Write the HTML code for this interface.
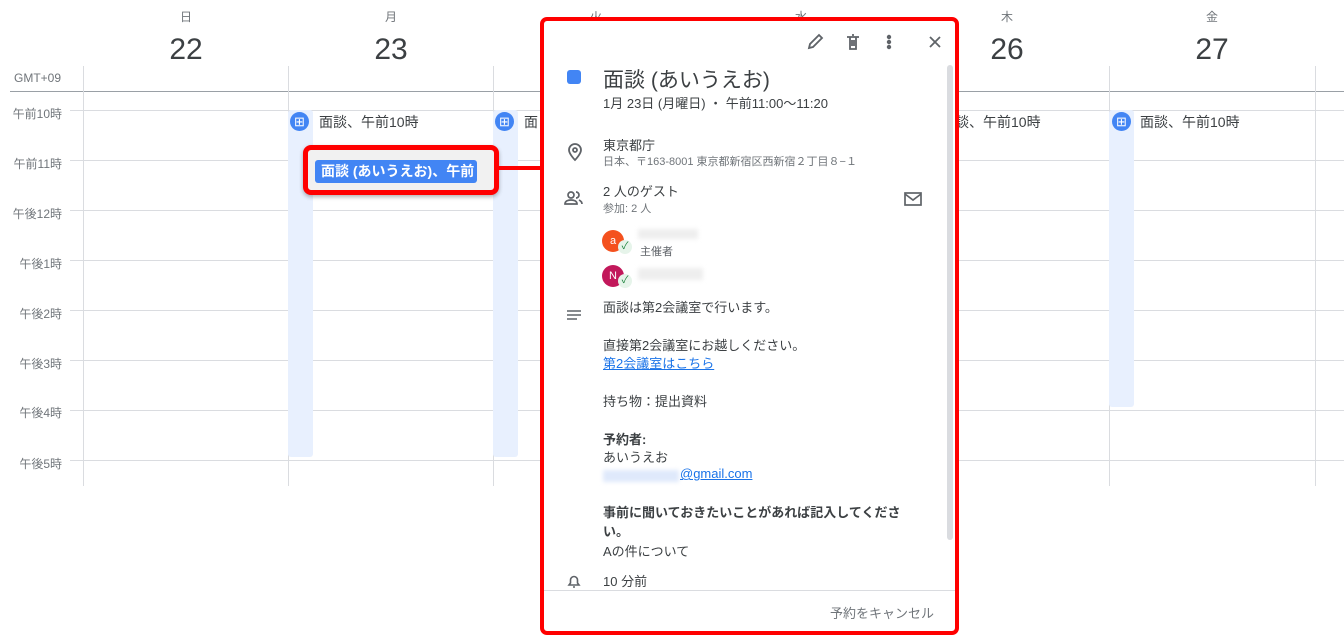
<!DOCTYPE html><html><head><meta charset="utf-8"><style>
*{margin:0;padding:0;box-sizing:border-box}
body{width:1344px;height:639px;background:#fff;font-family:"Liberation Sans","Noto Sans CJK JP",sans-serif;color:#3c4043;position:relative;overflow:hidden}
.a{position:absolute}
.dn{font-size:12px;color:#70757a;width:40px;text-align:center}
.dd{font-size:30px;color:#3c4043;width:80px;text-align:center}
.vl{width:1px;background:#dadce0;top:66px;height:420px}
.hl{height:1px;background:#dadce0;left:70px;width:1274px}
.tl{font-size:12px;color:#70757a;right:1282px;text-align:right;white-space:nowrap}
.ev{background:#e8f0fe;width:25px;border-radius:3px}
.ic{width:19px;height:19px;border-radius:50%;background:#4285f4;color:#fff;font-size:13px;text-align:center;line-height:19px}
.et{font-size:14px;color:#3c4043;white-space:nowrap}
.p{font-size:13px;color:#3c4043;white-space:nowrap}
</style></head><body>
<div class="a dn" style="left:166px;top:8px">日</div><div class="a dd" style="left:146px;top:33px">22</div>
<div class="a dn" style="left:371px;top:8px">月</div><div class="a dd" style="left:351px;top:33px">23</div>
<div class="a dn" style="left:576px;top:8px">火</div>
<div class="a dn" style="left:781px;top:8px">水</div>
<div class="a dn" style="left:987px;top:8px">木</div><div class="a dd" style="left:967px;top:33px">26</div>
<div class="a dn" style="left:1192px;top:8px">金</div><div class="a dd" style="left:1172px;top:33px">27</div>
<div class="a" style="left:14px;top:71px;font-size:12px;color:#70757a">GMT+09</div>
<div class="a" style="left:10px;top:91px;width:1334px;height:1px;background:#9aa0a6"></div>
<div class="a vl" style="left:83px"></div><div class="a vl" style="left:288px"></div><div class="a vl" style="left:493px"></div><div class="a vl" style="left:699px"></div><div class="a vl" style="left:904px"></div><div class="a vl" style="left:1109px"></div><div class="a vl" style="left:1315px"></div>
<div class="a hl" style="top:110px"></div><div class="a hl" style="top:160px"></div><div class="a hl" style="top:210px"></div><div class="a hl" style="top:260px"></div><div class="a hl" style="top:310px"></div><div class="a hl" style="top:360px"></div><div class="a hl" style="top:410px"></div><div class="a hl" style="top:460px"></div>
<div class="a tl" style="top:105px">午前10時</div><div class="a tl" style="top:155px">午前11時</div><div class="a tl" style="top:205px">午後12時</div><div class="a tl" style="top:255px">午後1時</div><div class="a tl" style="top:305px">午後2時</div><div class="a tl" style="top:355px">午後3時</div><div class="a tl" style="top:404px">午後4時</div><div class="a tl" style="top:455px">午後5時</div>
<div class="a ev" style="left:288px;top:110px;height:347px"></div>
<div class="a ev" style="left:493px;top:110px;height:347px"></div>
<div class="a ev" style="left:1109px;top:110px;height:297px"></div>
<div class="a ic" style="left:290px;top:112px">⊞</div><div class="a et" style="left:319px;top:112px">面談、午前10時</div>
<div class="a ic" style="left:495px;top:112px">⊞</div><div class="a et" style="left:524px;top:112px">面</div>
<div class="a et" style="left:955px;top:112px">談、午前10時</div>
<div class="a ic" style="left:1112px;top:112px">⊞</div><div class="a et" style="left:1140px;top:112px">面談、午前10時</div>
<div class="a" style="left:303px;top:145px;width:196px;height:50px;border:5px solid #f00;border-radius:8px;background:#f1f1f1;box-shadow:0 2px 4px rgba(0,0,0,.3)"></div>
<div class="a" style="left:315px;top:160px;width:162px;height:23px;background:#4285f4;border-radius:3px;color:#fff;font-weight:bold;font-size:14px;line-height:23px;padding-left:6px;overflow:hidden;white-space:nowrap">面談 (あいうえお)、午前</div>
<div class="a" style="left:498px;top:166px;width:44px;height:4px;background:#f00"></div>
<div class="a" style="left:540px;top:17px;width:419px;height:618px;border:4px solid #f00;border-radius:7px;background:#fff"></div>
<div class="a" style="left:947px;top:65px;width:6px;height:475px;background:#dadce0;border-radius:3px"></div>
<svg class="a" style="left:805px;top:32px" width="140" height="20" fill="none" stroke="#5f6368" stroke-width="1.8"><path d="M4 16l1-4L14 3l3 3-9 9z"/><path d="M42 5h12M45 5v12h6V5M47 3h2M47 8v6M49 8v6"/><circle cx="84" cy="5" r="1.3" fill="#5f6368"/><circle cx="84" cy="10" r="1.3" fill="#5f6368"/><circle cx="84" cy="15" r="1.3" fill="#5f6368"/><path d="M125 5l10 10M135 5l-10 10"/></svg>
<div class="a" style="left:567px;top:70px;width:14px;height:14px;background:#4285f4;border-radius:3px"></div>
<div class="a" style="left:603px;top:64px;font-size:21px;color:#3c4043">面談 (あいうえお)</div>
<div class="a p" style="left:603px;top:93px">1月 23日 (月曜日) ・ 午前11:00～11:20</div>
<svg class="a" style="left:565px;top:142px" width="20" height="20" fill="none" stroke="#5f6368" stroke-width="1.8"><path d="M10 18s-6-6-6-10a6 6 0 0 1 12 0c0 4-6 10-6 10z"/><circle cx="10" cy="8" r="2"/></svg>
<div class="a p" style="left:603px;top:135px">東京都庁</div>
<div class="a" style="left:603px;top:153px;font-size:11px;color:#70757a">日本、〒163-8001 東京都新宿区西新宿２丁目８−１</div>
<svg class="a" style="left:564px;top:190px" width="20" height="16" fill="none" stroke="#5f6368" stroke-width="1.7"><circle cx="7" cy="5" r="3"/><path d="M1 14c0-3 3-4 6-4s6 1 6 4zM12 2a3 3 0 0 1 0 6M15 10c2 1 3 2 3 4"/></svg>
<div class="a p" style="left:603px;top:181px">2 人のゲスト</div>
<div class="a" style="left:603px;top:200px;font-size:11px;color:#70757a">参加: 2 人</div>
<svg class="a" style="left:904px;top:192px" width="18" height="14" fill="none" stroke="#5f6368" stroke-width="1.7"><rect x="1" y="1" width="16" height="12"/><path d="M1 2l8 6 8-6"/></svg>
<div class="a" style="left:602px;top:230px;width:22px;height:22px;border-radius:50%;background:#f4511e;color:#fff;font-size:11px;text-align:center;line-height:22px">a</div>
<div class="a" style="left:618px;top:240px;width:14px;height:14px;border-radius:50%;background:#e6f4ea;color:#188038;font-size:10px;text-align:center;line-height:14px">✓</div>
<div class="a" style="left:638px;top:229px;width:60px;height:10px;background:#eee;filter:blur(2px)"></div>
<div class="a" style="left:640px;top:243px;font-size:11px;color:#5f6368">主催者</div>
<div class="a" style="left:602px;top:265px;width:22px;height:22px;border-radius:50%;background:#c2185b;color:#fff;font-size:11px;text-align:center;line-height:22px">N</div>
<div class="a" style="left:618px;top:274px;width:14px;height:14px;border-radius:50%;background:#e6f4ea;color:#188038;font-size:10px;text-align:center;line-height:14px">✓</div>
<div class="a" style="left:638px;top:268px;width:65px;height:12px;background:#eee;filter:blur(2px)"></div>
<svg class="a" style="left:566px;top:309px" width="16" height="12" stroke="#5f6368" stroke-width="1.6"><path d="M1 2h14M1 6h14M1 10h10"/></svg>
<div class="a p" style="left:603px;top:297px">面談は第2会議室で行います。</div>
<div class="a p" style="left:603px;top:335px">直接第2会議室にお越しください。</div>
<div class="a p" style="left:603px;top:353px;color:#1a73e8;text-decoration:underline">第2会議室はこちら</div>
<div class="a p" style="left:603px;top:391px">持ち物：提出資料</div>
<div class="a p" style="left:603px;top:429px;font-weight:bold">予約者:</div>
<div class="a p" style="left:603px;top:447px">あいうえお</div>
<div class="a" style="left:603px;top:470px;width:76px;height:12px;background:#dfe9fb;filter:blur(2px)"></div>
<div class="a p" style="left:680px;top:466px;color:#1a73e8;text-decoration:underline">@gmail.com</div>
<div class="a" style="left:603px;top:503px;width:320px;font-size:13px;font-weight:bold;line-height:19px">事前に聞いておきたいことがあれば記入してください。</div>
<div class="a p" style="left:603px;top:541px">Aの件について</div>
<svg class="a" style="left:567px;top:573px" width="14" height="16" fill="none" stroke="#5f6368" stroke-width="1.6"><path d="M2 12h10l-1.5-2V7a3.5 3.5 0 0 0-7 0v3zM6 14h2"/></svg>
<div class="a p" style="left:603px;top:571px">10 分前</div>
<div class="a" style="left:544px;top:590px;width:411px;height:1px;background:#dadce0"></div>
<div class="a p" style="left:830px;top:603px;color:#70757a">予約をキャンセル</div>
</body></html>
